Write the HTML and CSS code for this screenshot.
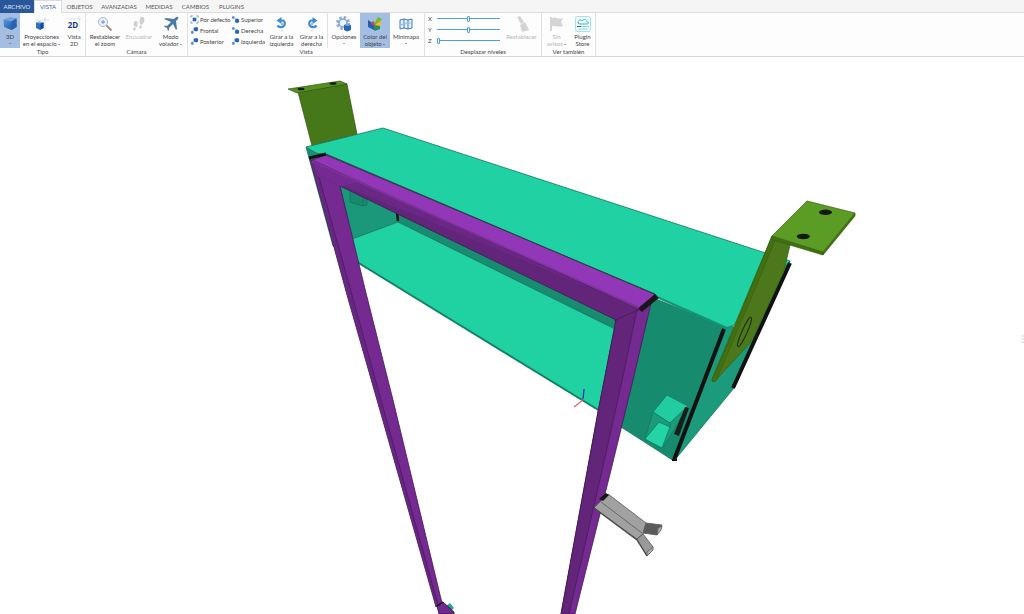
FILE: index.html
```html
<!DOCTYPE html>
<html lang="es">
<head>
<meta charset="utf-8">
<title>Vista 3D</title>
<link rel="stylesheet" href="styles.css">
</head>
<body>
<svg class="defs" aria-hidden="true">
  <defs>
    <linearGradient id="blue" x1="0" y1="0" x2="1" y2="1"><stop offset="0" stop-color="#5a9be0"/><stop offset="1" stop-color="#1b4f9c"/></linearGradient>
    <symbol id="cube" viewBox="0 0 16 16"><path d="M1.500 3.500 8 1.500l6.500 1v8.500l-5 3-7.500-3z" fill="url(#blue)"/><path d="M1.500 3.500l8 2 5-3-6.500-1z" fill="#6fa3df"/><path d="M9.500 5.500v8.500l5-3V2.500z" fill="#2a62b2"/></symbol>
    <symbol id="turn" viewBox="0 0 16 16"><path d="M5 4.500h4a4 3.600 0 1 1-5.500 5" fill="none" stroke="#3f8bd4" stroke-width="2.200"/><path d="M7.500 1v7L2.500 4.500z" fill="#3f8bd4"/><circle cx="8" cy="8" r="1.200" fill="#8bbbe8"/><path d="M8 13v3" stroke="#b8c4d0" stroke-width=".6"/></symbol>
    <symbol id="axis" viewBox="0 0 10 10"><path d="M4.500 5l2.500-1 2 1v3L7 9 4.500 8z" fill="#2767b5"/><path d="M1 2l1.500-1L4 2v1.500L2.500 4.500 1 3.500z" fill="#5c8fd0"/><path d="M4 3l2 1" stroke="#8aa6c8" fill="none"/></symbol>
    <symbol id="axis2" viewBox="0 0 10 10"><path d="M4 2l3-1 2 1v3L7 6 4 5z" fill="#2767b5"/><path d="M1 6l2-1 1 1v2L3 9 1 8z" fill="#5c8fd0"/></symbol>
  </defs>
</svg>

<header class="ribbon">
  <nav class="tabs" aria-label="Cinta">
    <button class="tab tab-file">ARCHIVO</button>
    <button class="tab tab-active">VISTA</button>
    <button class="tab">OBJETOS</button>
    <button class="tab">AVANZADAS</button>
    <button class="tab">MEDIDAS</button>
    <button class="tab">CAMBIOS</button>
    <button class="tab">PLUGINS</button>
  </nav>

  <div class="groups">
    <section class="group g-type">
      <div class="tools">
        <button class="tool selected"><svg class="icon"><use href="#cube"/></svg><span>3D</span><i class="caret"></i></button>
        <button class="tool"><svg class="icon" viewBox="0 0 16 16"><path d="M2 4h13M11 1v14" stroke="#c9ced6" stroke-width=".6"/><path d="M2 6.500l3.500-1 4 1v5.500l-3.500 2-4-2z" fill="#2e6fbe"/><path d="M2 6.500l3.500-1 4 1-3.500 1z" fill="#8dbcf0"/><path d="M6.500 7.500v6l3-1.500V6.500z" fill="#174a93"/></svg><span>Proyecciones<br>en el espacio <i class="caret"></i></span></button>
        <button class="tool"><svg class="icon" viewBox="0 0 16 16"><path d="M1 3h14M13 0v15" stroke="#c9ced6" stroke-width=".6"/><text x="7" y="12" text-anchor="middle" class="icon-text">2D</text></svg><span>Vista<br>2D</span></button>
      </div>
      <h2 class="caption">Tipo</h2>
    </section>

    <section class="group g-camera">
      <div class="tools">
        <button class="tool"><svg class="icon" viewBox="0 0 16 16"><circle cx="6" cy="6" r="4.500" fill="#eaf2fb" stroke="#a9b7c9"/><path d="M6 4v4M4 6h4" stroke="#5c97d8"/><path d="M9.500 9.500l5 5" stroke="#a58c7c" stroke-width="1.800"/></svg><span>Restablecer<br>el zoom</span></button>
        <button class="tool" disabled><svg class="icon" viewBox="0 0 16 16"><path d="M10 1c3-1 4 2 3 5l-2 3-2-1c-1-3 0-6 1-7zM9 9l2 1-1 3-2-1zM5 5c2 0 2 3 1 6l-3-1C2 8 3 5 5 5zM3 11l2 1-1 3-2-1z" fill="#8d8d8d"/></svg><span>Encuadrar</span></button>
        <button class="tool"><svg class="icon" viewBox="0 0 16 16"><path d="M15 1c-1-1-3 1-4 2L3 2 1 3l7 3-4 4-2-.500-1 1 3 1.500L5 15l1-1 0-2 4-4 3 6 1-1-1-8c2-2 3-3 2-4z" fill="#4c7ba6"/></svg><span>Modo<br>volador <i class="caret"></i></span></button>
      </div>
      <h2 class="caption">Cámara</h2>
    </section>

    <section class="group g-view">
      <div class="tools">
        <div class="views">
          <button class="view"><svg class="mini" viewBox="0 0 10 10"><path d="M1 3V1h2M7 1h2v2M9 7v2H7M3 9H1V7" fill="none" stroke="#6d96c8"/><path d="M3 3h4v4H3z" fill="#2562af"/></svg>Por defecto</button>
          <button class="view"><svg class="mini"><use href="#axis"/></svg>Superior</button>
          <button class="view"><svg class="mini"><use href="#axis2"/></svg>Frontal</button>
          <button class="view"><svg class="mini"><use href="#axis"/></svg>Derecha</button>
          <button class="view"><svg class="mini"><use href="#axis2"/></svg>Posterior</button>
          <button class="view"><svg class="mini"><use href="#axis2"/></svg>Izquierda</button>
        </div>
        <button class="tool"><svg class="icon"><use href="#turn"/></svg><span>Girar a la<br>izquierda</span></button>
        <button class="tool"><svg class="icon flip"><use href="#turn"/></svg><span>Girar a la<br>derecha</span></button>
        <button class="tool divided"><svg class="icon" viewBox="0 0 16 16"><circle cx="7" cy="7" r="5.500" fill="none" stroke="#8fadd0" stroke-width="3" stroke-dasharray="2.400 1.920"/><circle cx="7" cy="7" r="4" fill="#edf4fc" stroke="#7fa5d2" stroke-width="1.500"/><path d="M8 9l3-1 4 1v5l-4 1.500L8 14z" fill="#2865b4"/><path d="M8 9l3-1 4 1-3 1z" fill="#83b0e8"/></svg><span>Opciones</span><i class="caret"></i></button>
        <button class="tool selected"><svg class="icon" viewBox="0 0 16 16"><path d="M1 4l6 4v6l-6-3z" fill="#245fae"/><path d="M6 5l3 3-2 2-3-3z" fill="#dc4737"/><path d="M7 8l4-7 4 2-5 6z" fill="#79b82f"/><path d="M9 8l5-3v4l-4 3z" fill="#f1bd27"/><path d="M7 9l6 1v3l-5 2-1-1z" fill="#2d8d62"/></svg><span>Color del<br>objeto <i class="caret"></i></span></button>
        <button class="tool"><svg class="icon" viewBox="0 0 16 16"><path d="M2 4l4-1 4 1 4-1v9l-4 1-4-1-4 1zM6 3v9M10 4v9" fill="#e7f1fb" stroke="#3c7cc2"/><path d="M2 10l2-2 2 1 4-3 4 2" fill="none" stroke="#8bb8e8"/></svg><span>Minimapa</span><i class="caret"></i></button>
      </div>
      <h2 class="caption">Vista</h2>
    </section>

    <section class="group g-levels">
      <div class="tools">
        <div class="sliders">
          <label for="level-x">X</label><input id="level-x" type="range" value="50">
          <label for="level-y">Y</label><input id="level-y" type="range" value="50">
          <label for="level-z">Z</label><input id="level-z" type="range" value="0">
        </div>
        <button class="tool" disabled><svg class="icon" viewBox="0 0 16 16"><path d="M3 1l3-1 4 6-3 2zM6 9l5-3 4 8-7 2z" fill="#999"/></svg><span>Restablecer</span></button>
      </div>
      <h2 class="caption">Desplazar niveles</h2>
    </section>

    <section class="group g-more">
      <div class="tools">
        <button class="tool" disabled><svg class="icon" viewBox="0 0 16 16"><path d="M1 1h2v14H1zM3 2c4-2 5 2 11 0l-2 4 2 4c-5 2-7-1-11 0z" fill="#999"/></svg><span>Sin<br>avisos <i class="caret"></i></span></button>
        <button class="tool"><svg class="icon" viewBox="0 0 16 16"><rect x=".500" y=".500" width="15" height="15" rx="2" fill="#f2fcfd" stroke="#a5e3e8"/><path d="M3 7c0-3 3-4 4-2 2-3 5-1 5 1 2 0 2 2 0 2H4z" fill="none" stroke="#35b7c3"/><path d="M2 10.500h4" stroke="#555"/><path d="M6 10.500h8M3 13h10" stroke="#8bd6dc"/></svg><span>Plugin<br>Store</span></button>
      </div>
      <h2 class="caption">Ver también</h2>
    </section>
  </div>
</header>

<main class="viewport">
  <svg class="model" viewBox="0 57 1024 557" role="img" aria-label="Modelo 3D">
    <!-- left bracket -->
    <g stroke="#315713" stroke-width=".7">
      <path d="M298 92l49-8 10 50-45 12z" fill="#467719"/>
      <path d="M288 89l52-8 7 3-50 9z" fill="#55901f"/>
    </g>
    <ellipse cx="301" cy="89" rx="3.500" ry="1.300" fill="#111c0b"/>
    <ellipse cx="333" cy="83.500" rx="3.500" ry="1.300" fill="#111c0b"/>

    <!-- cabinet -->
    <g stroke="#14765d" stroke-width=".8">
      <path d="M306 147l16 8 14 93-3-2z" fill="#1a8f71"/>
      <path d="M338 184l60 28v10l-46 18z" fill="#1a9879" stroke="none"/>
      <path d="M350 191v11l13 4 4-1v-8" fill="#178a6e"/>
      <path d="M363 197v9" fill="none"/>
      <path d="M398 212l219 106v12L398 222z" fill="#188c70"/>
      <path d="M352 239l46-17 219 108-17 81-243-149z" fill="#20d1a2"/>
      <path d="M651 297l78 31-55 133-53-34z" fill="#168b6e"/>
      <path d="M724 328l11-1 55-66-56 127-60 73z" fill="#1b9b7b"/>
      <path d="M306 147l77-19 407 133-58 66-5 1-71-31L326 155l-10-2z" fill="#20d1a3"/>
    </g>
    <path d="M357 262l243 149" stroke="#148266" stroke-width="2"/>
    <path d="M657 297l70 31 6-2" fill="none" stroke="#149575" stroke-width="2"/>
    <path d="M397 212l1 9" stroke="#121212" stroke-width="2.500"/>
    <path d="M724 329l-50 131M790 263l-57 125" stroke="#111" stroke-width="4"/>
    <path d="M672 460h5" stroke="#111" stroke-width="2"/>

    <!-- inner box -->
    <g stroke="#14795f" stroke-width=".8">
      <path d="M653 412l17 10 18-16-25 42-18-9z" fill="#1a9b7b"/>
      <path d="M653 412l14-17 21 11-18 17z" fill="#20cca0"/>
      <path d="M645 439l14-17 11 5-8 21z" fill="#22d4a6"/>
      <path d="M670 422v6" fill="none"/>
    </g>
    <path d="M685 407l4 1-10 28-5-2z" fill="#171d1b"/>

    <!-- right bracket -->
    <g stroke="#36600f" stroke-width=".7">
      <path d="M772 236l18 9-6 26-30 65-3 6-36 39q-3 2-3-2z" fill="#4c781b"/>
      <path d="M772 236l3 4-20 49-39 92q-3 2-4-1l23-52z" fill="#447014"/>
      <path d="M772 236l51 16v3l-50-15z" fill="#407013"/>
      <path d="M823 252l32-39v3l-32 39z" fill="#417416"/>
      <path d="M772 236l35-35 48 12-32 39z" fill="#5b9c24"/>
    </g>
    <ellipse cx="825.500" cy="212.300" rx="6.500" ry="2.700" fill="#15190d"/>
    <ellipse cx="803.300" cy="236.500" rx="6.500" ry="2.700" fill="#15190d"/>
    <ellipse cx="744.500" cy="332" rx="2.600" ry="16" transform="rotate(24 744.500 332)" fill="#4c781b" stroke="#1b310b"/>

    <!-- frame -->
    <g stroke="#421853" stroke-width=".8">
      <path d="M310 159L340 186 366 293 393 400 442 603 436 607 377 400 347 295z" fill="#742a90"/>
      <path d="M310 159L319 177 352 295 381 400 438 605 436 606 377 400 347 295z" fill="#662780" stroke="none"/>
      <path d="M319 177L352 295 381 400 438 605" fill="none" stroke="#4d1b62"/>
      <path d="M313 162l328 148-25 10-276-134-20-10z" fill="#622579" stroke="none"/>
      <path d="M340 186l276 134" stroke="#421853"/>
      <path d="M312 160l326 148-318-132z" fill="#6a2884" stroke="none"/>
      <path d="M312 160l8 16 20 10 20-4z" fill="#742a90" stroke="none"/>
      <path d="M312 160l14-5 329 139-14 16z" fill="#9237b7"/>
      <path d="M616 320l25-11 11-10-19 81-22 90-36 144h-14l37-202z" fill="#742a90"/>
      <path d="M616 320l21-10-15 71-20 90-33 143h-8l37-202z" fill="#622579" stroke="none"/>
      <path d="M614 321l26-12M637 310l-15 71-20 90-33 143" fill="none" stroke-width=".6"/>
      <path d="M616 320l-18 92-37 202" fill="none"/>
    </g>
    <path d="M312 161l326 146" stroke="#7d3399" stroke-width="1.500"/>
    <path d="M326 154l328 140" stroke="#304142" stroke-width="1"/>
    <path d="M309 158l17-4" stroke="#111" stroke-width="3"/>
    <path d="M640 310l17-14" stroke="#171719" stroke-width="5.500"/>
    <path d="M446 606l4-3 4 5-3 3z" fill="#24a887"/>
    <path d="M437 606l6-4 11 10v2h-15z" fill="#722990" stroke="#26102e" stroke-width=".8"/>
    <path d="M437 606l6-4" stroke="#111" stroke-width="1.500"/>

    <!-- clip -->
    <g stroke="#626262" stroke-width=".9">
      <path d="M594 508l14-14 38 29-3 11-6 5z" fill="#a1a1a1"/>
      <path d="M646 523l16 2-5 10-14-2z" fill="#5b5b5b"/>
      <path d="M658 528l4-2-1 4-4 5z" fill="#aaa"/>
      <path d="M637 539l6-5 10 13-6 9z" fill="#999"/>
      <path d="M647 552l6-5v3l-6 6z" fill="#b0b0b0"/>
      <path d="M601 502l41 31M637 539l6-5" fill="none"/>
      <path d="M594 508l43 32 10 16" fill="none" stroke="#484848" stroke-width="1.300"/>
    </g>
    <path d="M599 499l7-6 3 2-6 6z" fill="#151515"/>

    <!-- origin axes -->
    <path d="M583 399l1-10" stroke="#2436b0" stroke-width="1.300"/>
    <path d="M583 400l-9 7" stroke="#e96860" stroke-width="1.300"/>
    <path d="M1021 336h3M1021 339h3M1021 342h3" stroke="#d5d5d5"/>
  </svg>
</main>
</body>
</html>
```
FILE: styles.css
```css
* { box-sizing: border-box; }
body {
  margin: 0;
  min-height: 100vh;
  display: flex;
  flex-direction: column;
  background: #fff;
  color: #444;
  font: 6px/7px Lato, "Noto Sans", sans-serif;
}
button { padding: 0; border: 0; background: none; color: inherit; font: inherit; }
.defs { position: absolute; width: 0; height: 0; }

.ribbon { border-bottom: 1px solid #d2d4d8; background: #fdfdfd; }
.tabs {
  display: grid;
  grid-template-columns: 34px 28px 35px 44px 36px 37px 35px;
  height: 13px;
  background: #f5f5f5;
  border-bottom: 1px solid #dcdcdc;
}
.tab { line-height: 13px; color: #555; }
.tab-file { background: #2a579a; color: #dfe8f5; }
.tab-active { height: 13px; background: #fdfdfd; border: 1px solid #dcdcdc; border-bottom: 0; color: #3768aa; line-height: 12px; }

.groups { display: flex; height: 43px; }
.group { display: flex; flex-direction: column; border-right: 1px solid #e0e1e3; }
.tools { display: grid; height: 35px; }
.caption { margin: 0; font: inherit; text-align: center; line-height: 8px; color: #444; }
.g-type .tools { grid-template-columns: 20px 43px 22px; }
.g-camera .tools { grid-template-columns: 38px 30px 33px; }
.g-view .tools { grid-template-columns: 77px 29px 31px 33px 30px 32px; padding: 0 2px; }
.g-levels .tools { grid-template-columns: 77px 39px; }
.g-more .tools { grid-template-columns: 29px 23px; padding-right: 1px; }

.tool {
  display: flex;
  flex-direction: column;
  align-items: center;
  justify-content: flex-start;
  padding-top: 3px;
  white-space: nowrap;
}
.icon { width: 16px; height: 16px; margin-bottom: 1px; flex: none; }
.flip { transform: scaleX(-1); }
.icon-text { font: bold 8px "Open Sans", sans-serif; fill: #173f76; }
.selected { background: #a3bde3; }
.tool:disabled { color: #b5b5b5; }
.tool:disabled .icon { opacity: .4; }
.divided { border-left: 1px solid #e0e1e3; }
.caret { display: inline-block; border: 1px solid transparent; border-top-color: #555; border-bottom: 0; vertical-align: middle; }
.tool > .caret { margin-top: 3px; }

.views { display: grid; grid-template-columns: 41px 36px; grid-template-rows: repeat(3, 11px); padding-top: 1px; }
.view { display: flex; align-items: center; gap: 1px; white-space: nowrap; }
.mini { width: 9px; height: 9px; flex: none; }

.sliders { display: grid; grid-template-columns: 9px 63px; grid-template-rows: repeat(3, 11px); align-items: center; padding-left: 3px; }
input[type="range"] { appearance: none; width: 100%; height: 7px; margin: 0; background: linear-gradient(#4ba0d8, #4ba0d8) center / 100% 1px no-repeat; }
input[type="range"]::-webkit-slider-thumb { appearance: none; width: 3px; height: 6px; background: #fff; border: 1px solid #4ba0d8; border-radius: 1px; }

.viewport { flex: 1; display: flex; }
.model { display: block; width: 100%; height: auto; }
```
